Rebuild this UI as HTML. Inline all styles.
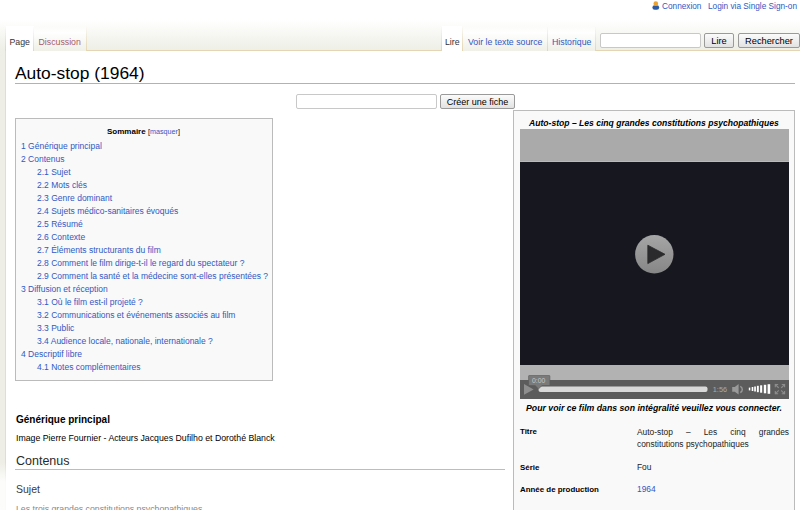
<!DOCTYPE html>
<html><head><meta charset="utf-8">
<style>
*{margin:0;padding:0;box-sizing:border-box}
html,body{width:800px;height:510px;overflow:hidden}
body{font-family:"Liberation Sans",sans-serif;background:#eeeee6;position:relative;color:#000}
a{color:#3058c4;text-decoration:none}
.abs{position:absolute;white-space:nowrap}
#pagebase{position:absolute;left:0;top:0;width:800px;height:60px;background:linear-gradient(#fff 0,#fff 20px,#eeefe6 49px)}
#content{position:absolute;left:5px;top:50px;width:795px;height:470px;background:#fff;border-left:1px solid #ebdcc0;border-top:1px solid #e6d5b5}
.personal{font-size:8.25px;top:2px;line-height:10px;color:#3058c4}
.tab{position:absolute;top:26px;height:25px;background:linear-gradient(rgba(255,255,255,0) 0,#fff 6px,#f0f0e8 25px);}
.tab.sel{background:#fff}
.tabsep{position:absolute;top:26px;width:1px;height:25px;background:linear-gradient(rgba(230,215,180,0),#e6d7b4)}
.tab span{position:absolute;font-size:8.75px;line-height:10px;top:11px;white-space:nowrap}
input.txt{position:absolute;border:1px solid #c8c8c8;background:#fff;border-radius:2px}
.btn{position:absolute;border:1px solid #9a9a9a;border-radius:2px;background:linear-gradient(#fbfbfb,#e2e2e2);font-size:9px;text-align:center;color:#000}

#toc{position:absolute;left:15px;top:118px;width:258px;height:263px;background:#f9f9f9;border:1px solid #bbb}
#toclist{position:absolute;left:0;top:21px;font-size:8.5px;line-height:13px;white-space:nowrap}

#toclist .l1{padding-left:5px}
#toclist .l2{padding-left:21px}
#infobox{position:absolute;left:513px;top:110px;width:282px;height:420px;background:#f9f9f9;border:1px solid #bbb}
#video{position:absolute;left:6px;top:18px;width:269px;height:270px}
.lbl{font-size:7.9px;font-weight:bold;line-height:10px}
.val{font-size:8.39px;line-height:10px;color:#222}
</style></head>
<body>
<div id="pagebase"></div>
<div id="content"></div>

<div class="abs" style="left:0;top:462px;width:6px;height:48px;background:linear-gradient(rgba(255,255,255,0),rgba(255,255,255,0.85) 20px,rgba(255,255,255,0.85))"></div>
<!-- personal -->
<svg class="abs" style="left:652px;top:0" width="8" height="11" viewBox="0 0 8 11">
 <rect x="0.4" y="5.2" width="6.8" height="4.5" rx="2.3" fill="#2c5ba6"/>
 <circle cx="3.8" cy="3.7" r="2.35" fill="#e8a334"/>
</svg>
<a class="abs personal" style="left:662px">Connexion</a>
<a class="abs personal" style="left:708px">Login via Single Sign-on</a>

<!-- left tabs -->
<div class="tabsep" style="left:5px"></div>
<div class="tab sel" style="left:6px;width:28px"><span style="left:3.5px;color:#333">Page</span></div>
<div class="tabsep" style="left:33px"></div>
<div class="tab" style="left:34px;width:52px"><span style="left:4.5px;color:#a85868">Discussion</span></div>
<div class="tabsep" style="left:86px"></div>

<!-- right tabs -->
<div class="tabsep" style="left:441px"></div>
<div class="tab sel" style="left:442px;width:20px"><span style="left:3px;color:#333">Lire</span></div>
<div class="tabsep" style="left:462px"></div>
<div class="tab" style="left:463px;width:84px"><span style="left:5px;color:#3058c4">Voir le texte source</span></div>
<div class="tabsep" style="left:547px"></div>
<div class="tab" style="left:548px;width:47px"><span style="left:4px;color:#3058c4">Historique</span></div>
<div class="tabsep" style="left:595px"></div>

<!-- search -->
<input class="txt" style="left:600px;top:33px;width:101px;height:15px">
<div class="btn" style="left:704px;top:33px;width:30px;height:15px;line-height:13px;padding-top:0.5px;font-size:9.25px">Lire</div>
<div class="btn" style="left:738px;top:33px;width:62px;height:15px;line-height:13px;padding-top:0.5px;font-size:9.25px">Rechercher</div>

<!-- title -->
<div class="abs" style="left:15px;top:64px;font-size:17.4px;line-height:18px;color:#000">Auto-stop (1964)</div>
<div class="abs" style="left:15px;top:83px;width:780px;height:1px;background:#b2b2b2"></div>

<!-- create form -->
<input class="txt" style="left:296px;top:94px;width:141px;height:15px">
<div class="btn" style="left:440px;top:94px;width:75px;height:15px;line-height:13px;padding-top:0.5px">Créer une fiche</div>


<!-- TOC -->
<div id="toc">
 <div class="abs" style="left:91px;top:8px;font-size:8px;font-weight:bold;line-height:10px">Sommaire <span style="font-weight:normal;font-size:7.2px">[<a>masquer</a>]</span></div>
 <div id="toclist">
<div class="l1"><a>1 Générique principal</a></div>
<div class="l1"><a>2 Contenus</a></div>
<div class="l2"><a>2.1 Sujet</a></div>
<div class="l2"><a>2.2 Mots clés</a></div>
<div class="l2"><a>2.3 Genre dominant</a></div>
<div class="l2"><a>2.4 Sujets médico-sanitaires évoqués</a></div>
<div class="l2"><a>2.5 Résumé</a></div>
<div class="l2"><a>2.6 Contexte</a></div>
<div class="l2"><a>2.7 Éléments structurants du film</a></div>
<div class="l2"><a>2.8 Comment le film dirige-t-il le regard du spectateur ?</a></div>
<div class="l2"><a>2.9 Comment la santé et la médecine sont-elles présentées ?</a></div>
<div class="l1"><a>3 Diffusion et réception</a></div>
<div class="l2"><a>3.1 Où le film est-il projeté ?</a></div>
<div class="l2"><a>3.2 Communications et événements associés au film</a></div>
<div class="l2"><a>3.3 Public</a></div>
<div class="l2"><a>3.4 Audience locale, nationale, internationale ?</a></div>
<div class="l1"><a>4 Descriptif libre</a></div>
<div class="l2"><a>4.1 Notes complémentaires</a></div>
 </div>
</div>

<!-- body left -->
<div class="abs" style="left:16px;top:413.5px;font-size:10px;font-weight:bold;line-height:11px">Générique principal</div>
<div class="abs" style="left:16px;top:432.5px;font-size:8.75px;line-height:10px">Image Pierre Fournier - Acteurs Jacques Dufilho et Dorothé Blanck</div>
<div class="abs" style="left:16px;top:454px;font-size:12.5px;line-height:14px;color:#2a2a2a">Contenus</div>
<div class="abs" style="left:15px;top:469px;width:490px;height:1px;background:#bdbdbd"></div>
<div class="abs" style="left:16px;top:484px;font-size:10.5px;line-height:11px;color:#3a3a3a">Sujet</div>
<div class="abs" style="left:16px;top:504px;font-size:8.75px;line-height:10px;color:#888">Les trois grandes constitutions psychopathiques</div>

<!-- infobox -->
<div id="infobox">
 <div class="abs" style="left:15px;top:7px;font-size:8.58px;font-weight:bold;font-style:italic;line-height:10px">Auto-stop – Les cinq grandes constitutions psychopathiques</div>
 <div id="video">
  <svg width="269" height="270" viewBox="0 0 269 270" style="position:absolute;left:0;top:0">
   <defs>
    <linearGradient id="pg" x1="0" y1="0" x2="0" y2="1"><stop offset="0" stop-color="#a6a6a6"/><stop offset="1" stop-color="#868686"/></linearGradient>
   </defs>
   <rect x="0" y="0" width="269" height="33" fill="#aaaaaa"/>
   <rect x="0" y="33" width="269" height="203" fill="#17181f"/>
   <rect x="0" y="32" width="269" height="1" fill="#bababa"/>
   <rect x="0" y="236" width="269" height="15" fill="#b2b2b2"/>
   <rect x="0" y="251" width="269" height="19" fill="#5c5c5c"/>
   <circle cx="134.3" cy="125.3" r="19.2" fill="url(#pg)"/>
   <path d="M127.8 116.2 L145 125.3 L127.8 134.6 Z" fill="#2b2b2d" stroke="#2b2b2d" stroke-width="0.8" stroke-linejoin="round"/>
   <path d="M4 255 L13.6 260.4 L4 265.7 Z" fill="#8e8e8e"/>
   <rect x="18.5" y="257.6" width="169" height="5.5" rx="2" fill="#d9d9d9"/>
   <path d="M8.6 247 Q8.6 246.5 9.1 246.5 L29.4 246.5 Q29.9 246.5 29.9 247 L29.9 256.1 Q29.9 256.6 29.4 256.6 L22 256.6 L18.5 259.9 L15.2 256.6 L9.1 256.6 Q8.6 256.6 8.6 256.1 Z" fill="#7a7a7a" stroke="#5a5a5a" stroke-width="0.6"/>
   <text x="12" y="254" font-family="Liberation Sans" font-size="6.8" fill="#c8c8c8">0:00</text>
   <text x="192.8" y="263" font-family="Liberation Sans" font-size="7.3" fill="#a9a9a9">1:56</text>
   <path d="M212.2 258 L214.8 258 L218.6 255.1 L218.6 265.6 L214.8 262.7 L212.2 262.7 Z" fill="#9a9a9a"/>
   <path d="M220.3 257.3 A3.4 3.4 0 0 1 220.3 263.5" stroke="#9a9a9a" stroke-width="1.4" fill="none"/>
   <rect x="228.8" y="258.6" width="1.5" height="2.8" fill="#fff"/>
   <rect x="231.7" y="258.0" width="1.6" height="4" fill="#fff"/>
   <rect x="234.2" y="257.5" width="1.7" height="5" fill="#fff"/>
   <rect x="236.9" y="256.8" width="1.9" height="6.4" fill="#fff"/>
   <rect x="240.1" y="256.3" width="2.1" height="7.4" fill="#fff"/>
   <rect x="243.8" y="255.8" width="2.4" height="8.5" fill="#fff"/>
   <rect x="247.6" y="255.2" width="2.6" height="9.6" fill="#fff"/>
   <g stroke="#8c8c8c" stroke-width="1.1" fill="none" stroke-linecap="square">
    <path d="M255.3 255.5 L258.3 258.5 M255.3 255.5 L257.6 255.5 M255.3 255.5 L255.3 257.8"/>
    <path d="M264.6 255.5 L261.6 258.5 M264.6 255.5 L262.3 255.5 M264.6 255.5 L264.6 257.8"/>
    <path d="M255.3 264.8 L258.3 261.8 M255.3 264.8 L257.6 264.8 M255.3 264.8 L255.3 262.5"/>
    <path d="M264.6 264.8 L261.6 261.8 M264.6 264.8 L262.3 264.8 M264.6 264.8 L264.6 262.5"/>
   </g>
  </svg>
 </div>
 <div class="abs" style="left:12px;top:292px;font-size:8.72px;font-weight:bold;font-style:italic;line-height:10px">Pour voir ce film dans son intégralité veuillez vous connecter.</div>
 <div class="abs lbl" style="left:6px;top:316px">Titre</div>
 <div class="abs val" style="left:123px;top:315px;width:152px;white-space:normal;text-align:justify;line-height:12px">Auto-stop – Les cinq grandes constitutions psychopathiques</div>
 <div class="abs lbl" style="left:6px;top:352px">Série</div>
 <div class="abs val" style="left:123px;top:351px">Fou</div>
 <div class="abs lbl" style="left:6px;top:374px">Année de production</div>
 <div class="abs lbl" style="left:6px;top:397px">Réalisation</div>
 <div class="abs val" style="left:123px;top:373px"><a>1964</a></div>
</div>
</body></html>
